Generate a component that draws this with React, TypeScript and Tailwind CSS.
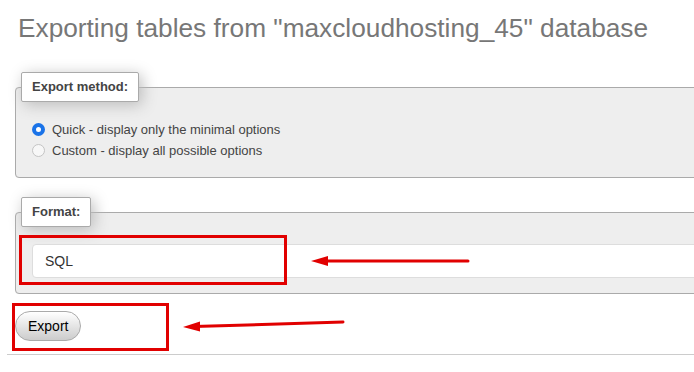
import React from "react";

const FONT = { fontFamily: '"Liberation Sans", Arial, sans-serif' };

const Legend: React.FC<{ label: string }> = ({ label }) => (
  <legend className="ml-[5px] px-[10px] py-[6px] leading-[16px] text-[13px] font-bold text-[#444] bg-white border border-[#aaa] rounded-[2px] shadow-[3px_3px_15px_#bbb]">
    {label}
  </legend>
);

const RadioRow: React.FC<{ label: string; checked?: boolean }> = ({ label, checked }) => (
  <label className="flex items-center h-[21px] gap-[7px] text-[13px] text-[#444]">
    <input
      type="radio"
      name="quick_or_custom"
      defaultChecked={checked}
      className="appearance-none m-0 w-[13px] h-[13px] rounded-full border border-[#c4c4c4] bg-[#f7f7f7] checked:border-[4px] checked:border-[#1a73e8] checked:bg-white"
    />
    <span>{label}</span>
  </label>
);

const App: React.FC = () => {
  return (
    <div className="relative w-[694px] h-[372px] overflow-hidden bg-white" style={FONT}>
      <h2 className="mt-[13px] ml-[18px] text-[26.25px] leading-[30px] font-normal text-[#777] whitespace-nowrap">
        Exporting tables from "maxcloudhosting_45" database
      </h2>

      <fieldset className="mt-[29px] ml-[15px] w-[720px] border border-[#aaa] rounded-[4px] bg-[#eee] pb-[16px]">
        <Legend label="Export method:" />
        <div className="pt-[17px] pl-[16px]">
          <RadioRow label="Quick - display only the minimal options" checked />
          <RadioRow label="Custom - display all possible options" />
        </div>
      </fieldset>

      <fieldset className="mt-[19px] ml-[15px] w-[720px] border border-[#aaa] rounded-[4px] bg-[#eee] pb-[15px]">
        <Legend label="Format:" />
        <div className="pt-[17px] pl-[16px]">
          <div className="h-[34px] flex items-center pl-[12px] bg-white border border-[#ddd] rounded-[4px] text-[14px] text-[#333]">
            SQL
          </div>
        </div>
      </fieldset>

      <div className="mt-[17px] ml-[15px]">
        <button className="h-[30px] px-[12px] rounded-full border border-[#aaa] bg-gradient-to-b from-white to-[#ccc] text-[14px] text-black">
          Export
        </button>
      </div>

      <hr className="mt-[13px] ml-[7px] border-0 border-t border-[#ccc]" />

      {/* annotations */}
      <div className="absolute left-[19px] top-[235px] w-[268px] h-[50px] border-[3px] border-[#e10000]" />
      <div className="absolute left-[12px] top-[303px] w-[157px] h-[48px] border-[3px] border-[#e10000]" />
      <svg className="absolute inset-0 pointer-events-none" width="694" height="372" viewBox="0 0 694 372">
        <line x1="468" y1="261" x2="322" y2="261" stroke="#e10000" strokeWidth="3" strokeLinecap="round" />
        <polygon points="311,261 328,256 328,266" fill="#e10000" />
        <line x1="343" y1="322" x2="194" y2="326.5" stroke="#e10000" strokeWidth="3" strokeLinecap="round" />
        <polygon points="183,327 200,321.5 200,331.5" fill="#e10000" />
      </svg>
    </div>
  );
};

export default App;
